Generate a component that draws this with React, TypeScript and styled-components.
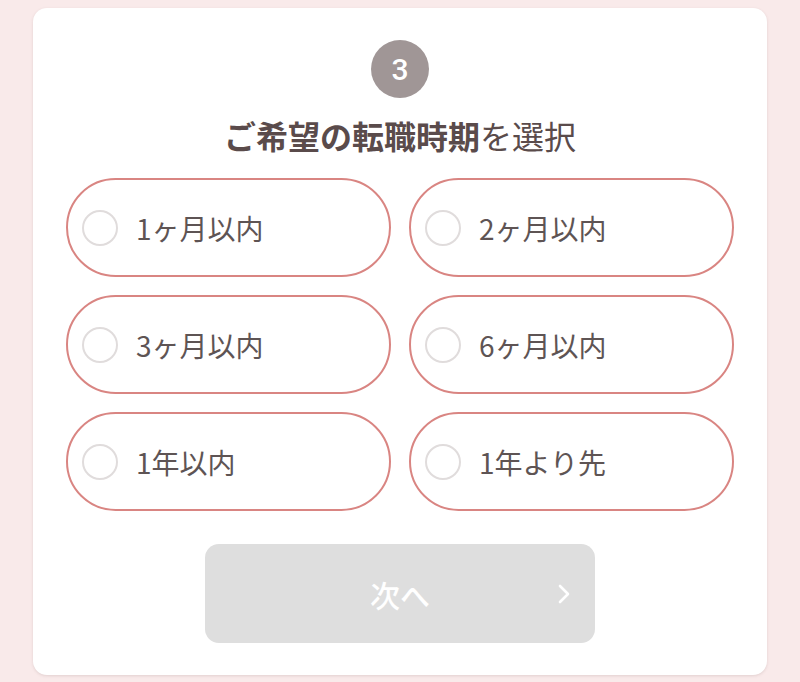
import React, { useState } from 'react';
import styled, { createGlobalStyle } from 'styled-components';

const GlobalStyle = createGlobalStyle`
  html, body {
    margin: 0;
    padding: 0;
    background: #f9eaea;
  }
  body {
    font-family: "Noto Sans CJK JP", "Noto Sans", sans-serif;
  }
`;

const Page = styled.div`
  padding: 8px 33px 0;
  min-height: 682px;
  box-sizing: border-box;
`;

const Card = styled.section`
  background: #fff;
  border-radius: 14px;
  box-shadow: 0 1px 3px rgba(120, 90, 90, 0.18);
  padding: 32px 33px 32px;
  display: flex;
  flex-direction: column;
  align-items: center;
`;

const StepBadge = styled.div`
  width: 58px;
  height: 58px;
  border-radius: 50%;
  background: #a09696;
  color: #fff;
  display: flex;
  align-items: center;
  justify-content: center;
  font-family: Roboto, "Liberation Sans", sans-serif;
  font-size: 30px;
  font-weight: 500;
`;

const Heading = styled.h2`
  margin: 17px 0 23px;
  font-size: 32px;
  line-height: 40px;
  font-weight: 400;
  color: #5a4b4b;

  strong {
    font-weight: 700;
  }
`;

const OptionGrid = styled.div`
  width: 100%;
  display: grid;
  grid-template-columns: 1fr 1fr;
  gap: 18px;
`;

const Option = styled.button<{ $selected: boolean }>`
  height: 99px;
  border: 2px solid #d98582;
  border-radius: 50px;
  background: ${(p) => (p.$selected ? '#fdf1f0' : '#fff')};
  display: flex;
  align-items: center;
  gap: 18px;
  padding: 0 0 0 14px;
  cursor: pointer;
  font-family: inherit;
  font-size: 28px;
  color: #5e5454;
  text-align: left;
`;

const Radio = styled.span<{ $selected: boolean }>`
  width: 36px;
  height: 36px;
  box-sizing: border-box;
  border-radius: 50%;
  border: 2px solid ${(p) => (p.$selected ? '#d98582' : '#e0dcdc')};
  background: ${(p) => (p.$selected ? 'radial-gradient(circle, #d98582 40%, #fff 44%)' : '#fff')};
  flex-shrink: 0;
`;

const NextButton = styled.button<{ $enabled: boolean }>`
  margin-top: 33px;
  width: 390px;
  height: 99px;
  border: none;
  border-radius: 14px;
  background: ${(p) => (p.$enabled ? '#d98582' : '#dedede')};
  color: #fff;
  font-family: inherit;
  font-size: 30px;
  font-weight: 500;
  position: relative;
  display: flex;
  align-items: center;
  justify-content: center;
  cursor: ${(p) => (p.$enabled ? 'pointer' : 'default')};
`;

const Chevron = styled.svg`
  position: absolute;
  right: 23px;
  top: 50%;
  transform: translateY(-50%);
`;

const options = ['1ヶ月以内', '2ヶ月以内', '3ヶ月以内', '6ヶ月以内', '1年以内', '1年より先'];

export default function App() {
  const [selected, setSelected] = useState<string | null>(null);

  return (
    <>
      <GlobalStyle />
      <Page>
        <Card>
          <StepBadge>3</StepBadge>
          <Heading>
            <strong>ご希望の転職時期</strong>を選択
          </Heading>
          <OptionGrid>
            {options.map((label) => (
              <Option
                key={label}
                type="button"
                $selected={selected === label}
                onClick={() => setSelected(label)}
              >
                <Radio $selected={selected === label} />
                {label}
              </Option>
            ))}
          </OptionGrid>
          <NextButton type="button" $enabled={selected !== null}>
            次へ
            <Chevron width="16" height="22" viewBox="0 0 16 22" fill="none">
              <polyline points="4,3 12,11 4,19" stroke="#fff" strokeWidth="2.6" strokeLinecap="round" strokeLinejoin="round" />
            </Chevron>
          </NextButton>
        </Card>
      </Page>
    </>
  );
}
